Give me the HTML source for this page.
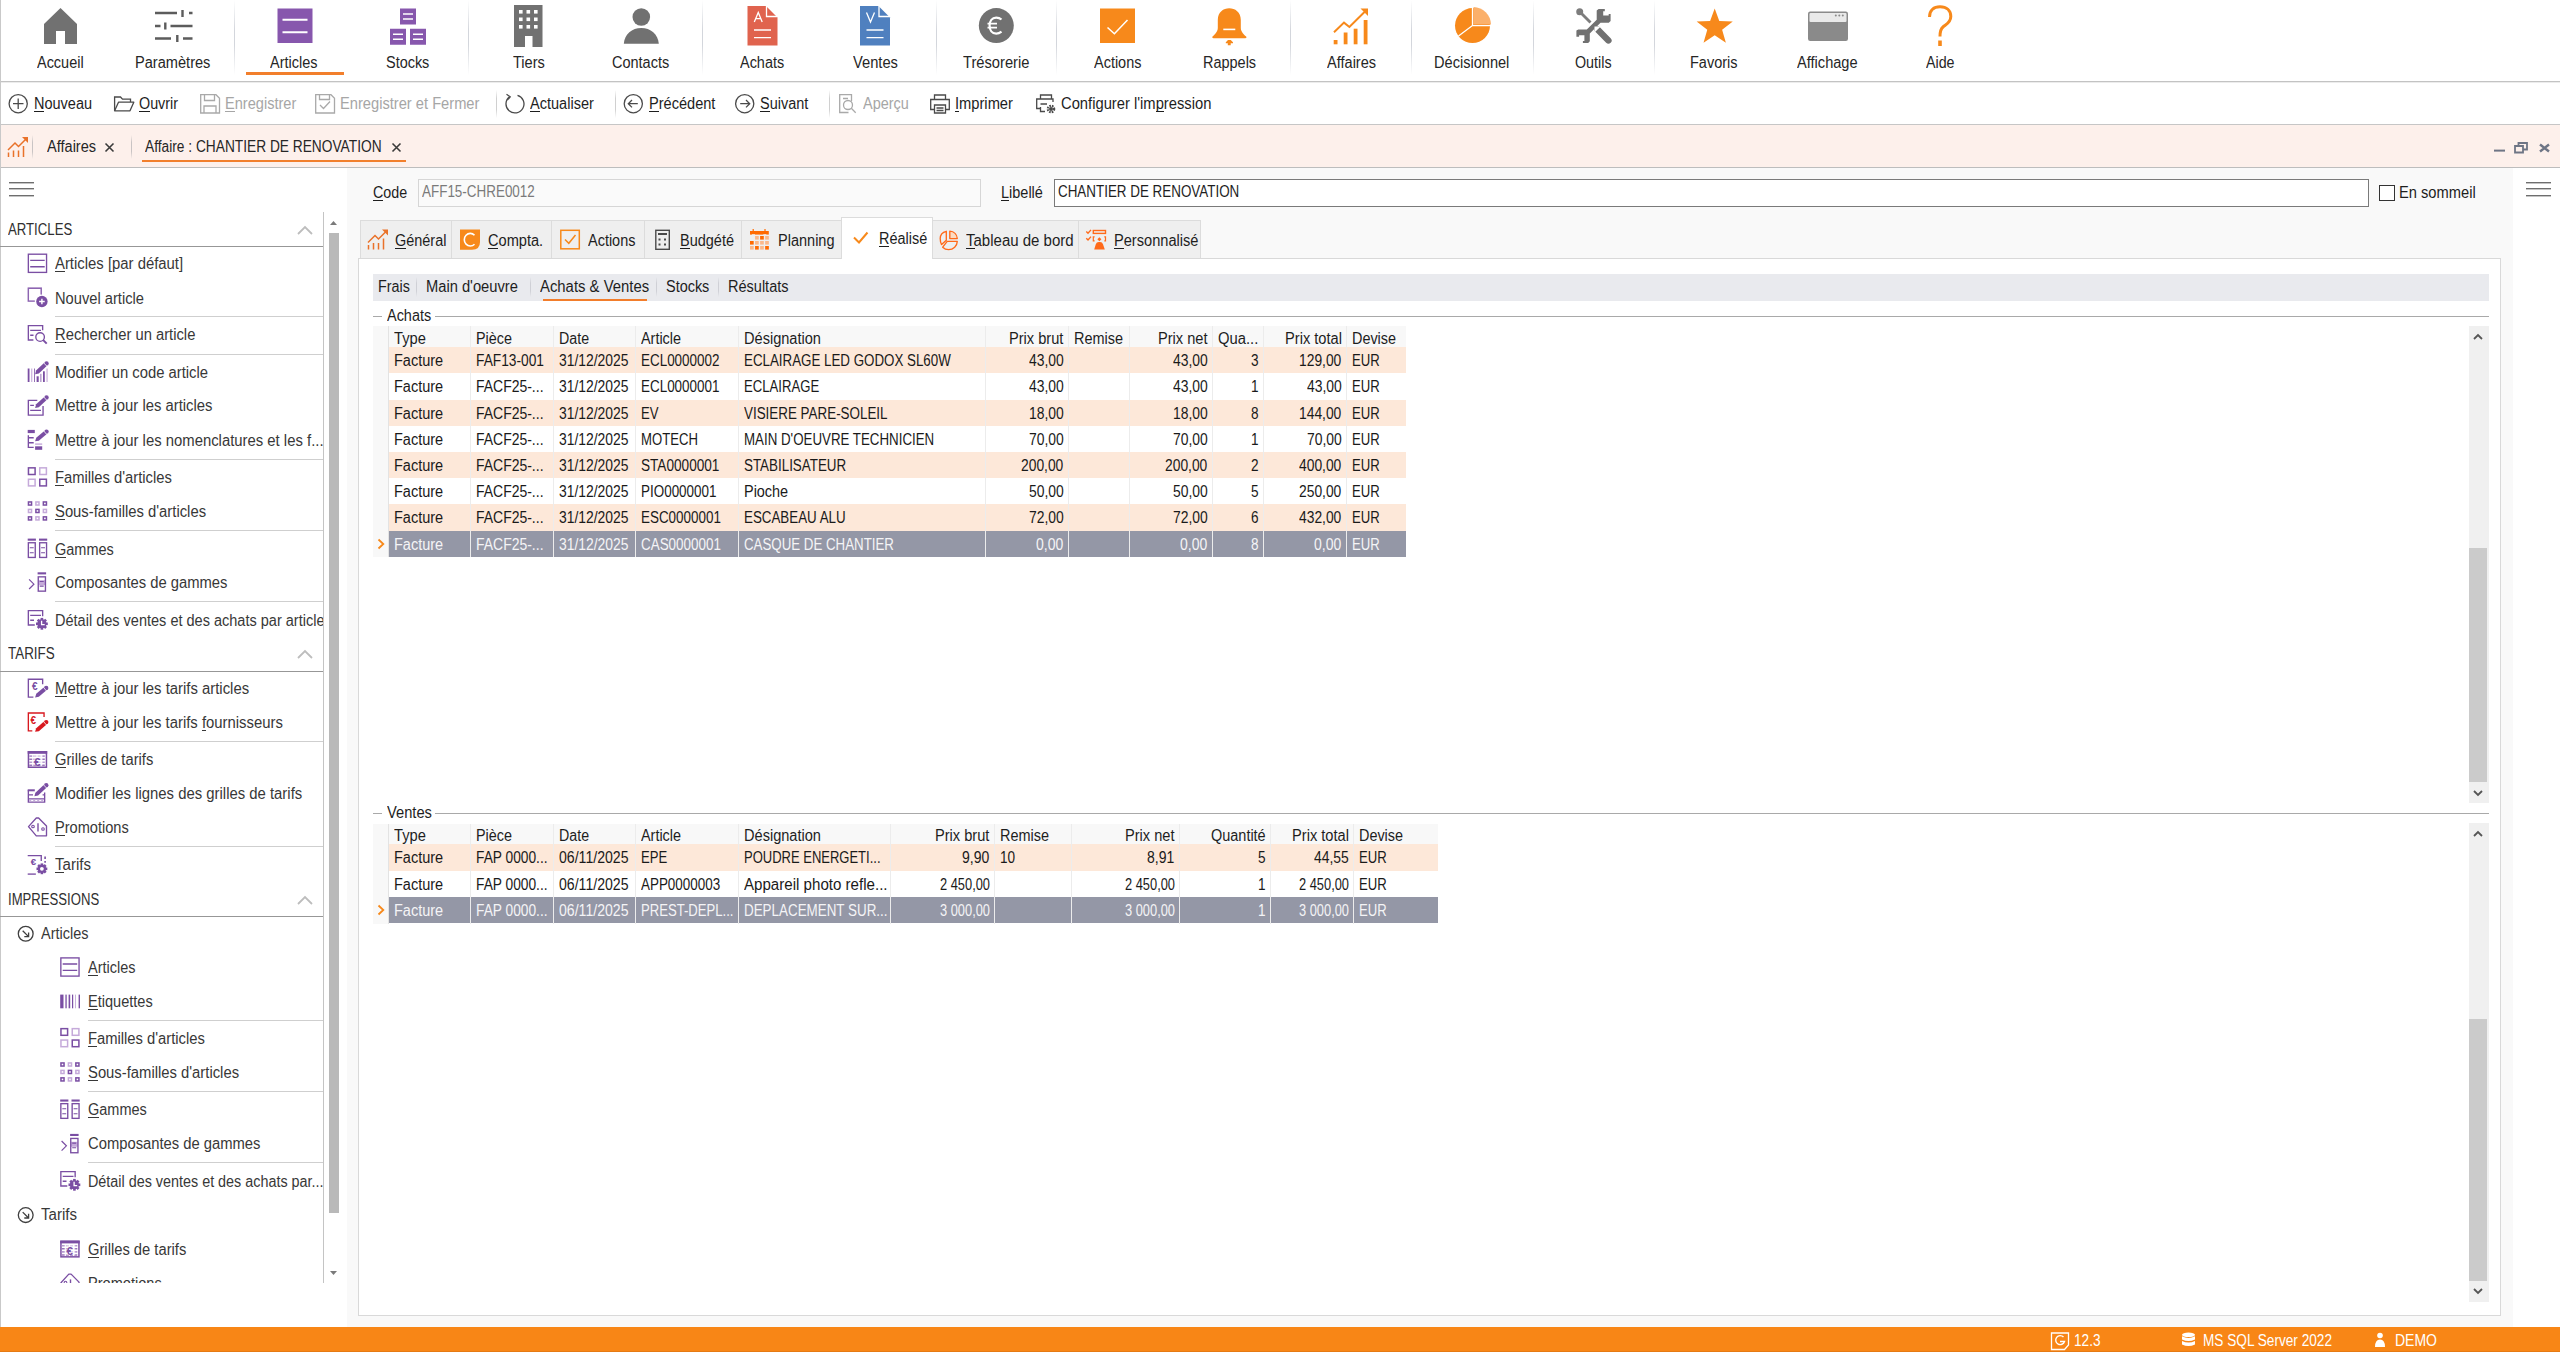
<!DOCTYPE html>
<html><head><meta charset="utf-8"><style>
html,body{margin:0;padding:0;width:2560px;height:1352px;overflow:hidden;background:#fff}
.t{position:absolute;white-space:pre;line-height:20px;font-family:"Liberation Sans",sans-serif;transform-origin:0 0}
svg{position:absolute;left:0;top:0}
</style></head><body>
<div style="position:absolute;left:0px;top:0px;width:2560px;height:1352px;background:#ffffff;"></div>
<div style="position:absolute;left:0px;top:0px;width:1px;height:1327px;background:#c9c9c9;"></div>
<div style="position:absolute;left:1px;top:81px;width:2559px;height:1px;background:#c3c3c3;"></div>
<div style="position:absolute;left:1px;top:82px;width:2559px;height:1px;background:#ececec;"></div>
<div style="position:absolute;left:234px;top:0px;width:1px;height:75px;background:linear-gradient(#ffffff,#d3d6dc 40%,#d3d6dc 60%,#ffffff);"></div>
<div style="position:absolute;left:468px;top:0px;width:1px;height:75px;background:linear-gradient(#ffffff,#d3d6dc 40%,#d3d6dc 60%,#ffffff);"></div>
<div style="position:absolute;left:702px;top:0px;width:1px;height:75px;background:linear-gradient(#ffffff,#d3d6dc 40%,#d3d6dc 60%,#ffffff);"></div>
<div style="position:absolute;left:936px;top:0px;width:1px;height:75px;background:linear-gradient(#ffffff,#d3d6dc 40%,#d3d6dc 60%,#ffffff);"></div>
<div style="position:absolute;left:1056px;top:0px;width:1px;height:75px;background:linear-gradient(#ffffff,#d3d6dc 40%,#d3d6dc 60%,#ffffff);"></div>
<div style="position:absolute;left:1290px;top:0px;width:1px;height:75px;background:linear-gradient(#ffffff,#d3d6dc 40%,#d3d6dc 60%,#ffffff);"></div>
<div style="position:absolute;left:1411px;top:0px;width:1px;height:75px;background:linear-gradient(#ffffff,#d3d6dc 40%,#d3d6dc 60%,#ffffff);"></div>
<div style="position:absolute;left:1533px;top:0px;width:1px;height:75px;background:linear-gradient(#ffffff,#d3d6dc 40%,#d3d6dc 60%,#ffffff);"></div>
<div style="position:absolute;left:1654px;top:0px;width:1px;height:75px;background:linear-gradient(#ffffff,#d3d6dc 40%,#d3d6dc 60%,#ffffff);"></div>
<div style="position:absolute;left:246px;top:71.5px;width:98px;height:3.3px;background:#f27f2c;"></div>
<div class="t" style="left:37.20px;top:53px;color:#262626;font-size:16px;transform:scaleX(0.9036);">Accueil</div>
<div class="t" style="left:135.30px;top:53px;color:#262626;font-size:16px;transform:scaleX(0.9118);">Paramètres</div>
<div class="t" style="left:270.29px;top:53px;color:#262626;font-size:16px;transform:scaleX(0.9040);">Articles</div>
<div class="t" style="left:385.84px;top:53px;color:#262626;font-size:16px;transform:scaleX(0.9020);">Stocks</div>
<div class="t" style="left:513.06px;top:53px;color:#262626;font-size:16px;transform:scaleX(0.9117);">Tiers</div>
<div class="t" style="left:612.39px;top:53px;color:#262626;font-size:16px;transform:scaleX(0.9061);">Contacts</div>
<div class="t" style="left:740.43px;top:53px;color:#262626;font-size:16px;transform:scaleX(0.9025);">Achats</div>
<div class="t" style="left:852.51px;top:53px;color:#262626;font-size:16px;transform:scaleX(0.9192);">Ventes</div>
<div class="t" style="left:963.28px;top:53px;color:#262626;font-size:16px;transform:scaleX(0.9187);">Trésorerie</div>
<div class="t" style="left:1094.03px;top:53px;color:#262626;font-size:16px;transform:scaleX(0.9040);">Actions</div>
<div class="t" style="left:1202.95px;top:53px;color:#262626;font-size:16px;transform:scaleX(0.9047);">Rappels</div>
<div class="t" style="left:1326.96px;top:53px;color:#262626;font-size:16px;transform:scaleX(0.9096);">Affaires</div>
<div class="t" style="left:1433.64px;top:53px;color:#262626;font-size:16px;transform:scaleX(0.9107);">Décisionnel</div>
<div class="t" style="left:1574.98px;top:53px;color:#262626;font-size:16px;transform:scaleX(0.8934);">Outils</div>
<div class="t" style="left:1690.25px;top:53px;color:#262626;font-size:16px;transform:scaleX(0.9058);">Favoris</div>
<div class="t" style="left:1796.70px;top:53px;color:#262626;font-size:16px;transform:scaleX(0.9125);">Affichage</div>
<div class="t" style="left:1925.74px;top:53px;color:#262626;font-size:16px;transform:scaleX(0.8904);">Aide</div>
<div style="position:absolute;left:1px;top:124px;width:2559px;height:1px;background:#c6c6c6;"></div>
<div style="position:absolute;left:496px;top:90px;width:1px;height:28px;background:linear-gradient(#ffffff,#d0d0d0 30%,#d0d0d0 70%,#ffffff);"></div>
<div style="position:absolute;left:615px;top:90px;width:1px;height:28px;background:linear-gradient(#ffffff,#d0d0d0 30%,#d0d0d0 70%,#ffffff);"></div>
<div style="position:absolute;left:829px;top:90px;width:1px;height:28px;background:linear-gradient(#ffffff,#d0d0d0 30%,#d0d0d0 70%,#ffffff);"></div>
<div class="t" style="left:34.00px;top:94px;color:#1e1e1e;font-size:16px;transform:scaleX(0.9064);">Nouveau</div>
<div style="position:absolute;left:34.00px;top:111px;width:10.47px;height:1px;background:#1e1e1e"></div>
<div class="t" style="left:139.00px;top:94px;color:#1e1e1e;font-size:16px;transform:scaleX(0.8954);">Ouvrir</div>
<div style="position:absolute;left:139.00px;top:111px;width:11.14px;height:1px;background:#1e1e1e"></div>
<div class="t" style="left:225.00px;top:94px;color:#a6a6a6;font-size:16px;transform:scaleX(0.9110);">Enregistrer</div>
<div style="position:absolute;left:225.00px;top:111px;width:9.72px;height:1px;background:#a6a6a6"></div>
<div class="t" style="left:340.00px;top:94px;color:#a6a6a6;font-size:16px;transform:scaleX(0.9169);">Enregistrer et Fermer</div>
<div class="t" style="left:530.00px;top:94px;color:#1e1e1e;font-size:16px;transform:scaleX(0.9094);">Actualiser</div>
<div style="position:absolute;left:530.00px;top:111px;width:9.71px;height:1px;background:#1e1e1e"></div>
<div class="t" style="left:649.00px;top:94px;color:#1e1e1e;font-size:16px;transform:scaleX(0.9100);">Précédent</div>
<div style="position:absolute;left:649.00px;top:111px;width:9.71px;height:1px;background:#1e1e1e"></div>
<div class="t" style="left:760.00px;top:94px;color:#1e1e1e;font-size:16px;transform:scaleX(0.9044);">Suivant</div>
<div style="position:absolute;left:760.00px;top:111px;width:9.65px;height:1px;background:#1e1e1e"></div>
<div class="t" style="left:862.50px;top:94px;color:#a6a6a6;font-size:16px;transform:scaleX(0.9033);">Aperçu</div>
<div class="t" style="left:955.00px;top:94px;color:#1e1e1e;font-size:16px;transform:scaleX(0.9179);">Imprimer</div>
<div style="position:absolute;left:955.00px;top:111px;width:4.08px;height:1px;background:#1e1e1e"></div>
<div class="t" style="left:1061.00px;top:94px;color:#1e1e1e;font-size:16px;transform:scaleX(0.9223);">Configurer l'impression</div>
<div style="position:absolute;left:1155.66px;top:111px;width:8.21px;height:1px;background:#1e1e1e"></div>
<div style="position:absolute;left:1px;top:125px;width:2559px;height:42px;background:#fdf0eb;"></div>
<div style="position:absolute;left:1px;top:167px;width:2559px;height:1px;background:#bdbdbd;"></div>
<div style="position:absolute;left:32px;top:135px;width:1px;height:24px;background:linear-gradient(#fdf0eb,#c9c4c4 30%,#c9c4c4 70%,#fdf0eb);"></div>
<div style="position:absolute;left:131px;top:135px;width:1px;height:24px;background:linear-gradient(#fdf0eb,#c9c4c4 30%,#c9c4c4 70%,#fdf0eb);"></div>
<div class="t" style="left:46.50px;top:137px;color:#262626;font-size:16px;transform:scaleX(0.9096);">Affaires</div>
<div class="t" style="left:145.00px;top:137px;color:#262626;font-size:16px;transform:scaleX(0.8583);">Affaire : CHANTIER DE RENOVATION</div>
<div style="position:absolute;left:142px;top:159.5px;width:264px;height:2px;background:#f27f2c;"></div>
<div style="position:absolute;left:1px;top:168px;width:346px;height:1159px;background:#ffffff;"></div>
<div style="position:absolute;left:323px;top:212px;width:1px;height:1071px;background:#c4c4c4;"></div>
<div style="position:absolute;left:329px;top:233px;width:10px;height:980px;background:#b9b9b9;"></div>
<div style="position:absolute;left:9px;top:182px;width:25px;height:1px;background:#6e6e6e;box-shadow:0 1px 0 #c4c4c4"></div>
<div style="position:absolute;left:9px;top:188px;width:25px;height:1px;background:#6e6e6e;box-shadow:0 1px 0 #c4c4c4"></div>
<div style="position:absolute;left:9px;top:195px;width:25px;height:1px;background:#6e6e6e;box-shadow:0 1px 0 #c4c4c4"></div>
<div style="position:absolute;left:0;top:0;width:323px;height:1283px;overflow:hidden">
<div class="t" style="left:8.00px;top:220px;color:#303030;font-size:16px;transform:scaleX(0.8237);">ARTICLES</div>
<div style="position:absolute;left:0px;top:246px;width:323px;height:1px;background:#979797;"></div>
<div class="t" style="left:8.00px;top:644px;color:#303030;font-size:16px;transform:scaleX(0.8382);">TARIFS</div>
<div style="position:absolute;left:0px;top:671px;width:323px;height:1px;background:#979797;"></div>
<div class="t" style="left:8.00px;top:890px;color:#303030;font-size:16px;transform:scaleX(0.8207);">IMPRESSIONS</div>
<div style="position:absolute;left:0px;top:916px;width:323px;height:1px;background:#979797;"></div>
<div class="t" style="left:55.00px;top:254px;color:#383838;font-size:16px;transform:scaleX(0.9296);">Articles [par défaut]</div>
<div style="position:absolute;left:55.00px;top:271px;width:9.92px;height:1px;background:#383838"></div>
<div class="t" style="left:55.00px;top:289px;color:#383838;font-size:16px;transform:scaleX(0.9172);">Nouvel article</div>
<div class="t" style="left:55.00px;top:325px;color:#383838;font-size:16px;transform:scaleX(0.9230);">Rechercher un article</div>
<div style="position:absolute;left:55.00px;top:342px;width:10.66px;height:1px;background:#383838"></div>
<div class="t" style="left:55.00px;top:363px;color:#383838;font-size:16px;transform:scaleX(0.9246);">Modifier un code article</div>
<div class="t" style="left:55.00px;top:396px;color:#383838;font-size:16px;transform:scaleX(0.9272);">Mettre à jour les articles</div>
<div class="t" style="left:55.00px;top:431px;color:#383838;font-size:16px;transform:scaleX(0.9291);">Mettre à jour les nomenclatures et les f...</div>
<div class="t" style="left:55.00px;top:468px;color:#383838;font-size:16px;transform:scaleX(0.9229);">Familles d'articles</div>
<div style="position:absolute;left:55.00px;top:485px;width:9.02px;height:1px;background:#383838"></div>
<div class="t" style="left:55.00px;top:502px;color:#383838;font-size:16px;transform:scaleX(0.9260);">Sous-familles d'articles</div>
<div style="position:absolute;left:55.00px;top:519px;width:9.88px;height:1px;background:#383838"></div>
<div class="t" style="left:55.00px;top:540px;color:#383838;font-size:16px;transform:scaleX(0.9052);">Gammes</div>
<div style="position:absolute;left:55.00px;top:557px;width:11.27px;height:1px;background:#383838"></div>
<div class="t" style="left:55.00px;top:573px;color:#383838;font-size:16px;transform:scaleX(0.9234);">Composantes de gammes</div>
<div class="t" style="left:55.00px;top:611px;color:#383838;font-size:16px;transform:scaleX(0.9073);">Détail des ventes et des achats par article</div>
<div class="t" style="left:55.00px;top:679px;color:#383838;font-size:16px;transform:scaleX(0.9289);">Mettre à jour les tarifs articles</div>
<div style="position:absolute;left:55.00px;top:696px;width:12.38px;height:1px;background:#383838"></div>
<div class="t" style="left:55.00px;top:713px;color:#383838;font-size:16px;transform:scaleX(0.9283);">Mettre à jour les tarifs fournisseurs</div>
<div style="position:absolute;left:201.92px;top:730px;width:4.13px;height:1px;background:#383838"></div>
<div class="t" style="left:55.00px;top:750px;color:#383838;font-size:16px;transform:scaleX(0.9211);">Grilles de tarifs</div>
<div style="position:absolute;left:55.00px;top:767px;width:11.46px;height:1px;background:#383838"></div>
<div class="t" style="left:55.00px;top:784px;color:#383838;font-size:16px;transform:scaleX(0.9297);">Modifier les lignes des grilles de tarifs</div>
<div class="t" style="left:55.00px;top:818px;color:#383838;font-size:16px;transform:scaleX(0.9115);">Promotions</div>
<div style="position:absolute;left:55.00px;top:835px;width:9.73px;height:1px;background:#383838"></div>
<div class="t" style="left:55.00px;top:855px;color:#383838;font-size:16px;transform:scaleX(0.9414);">Tarifs</div>
<div style="position:absolute;left:55.00px;top:872px;width:9.20px;height:1px;background:#383838"></div>
<div style="position:absolute;left:55px;top:316px;width:268px;height:1px;background:#cfcfcf;"></div>
<div style="position:absolute;left:55px;top:354px;width:268px;height:1px;background:#cfcfcf;"></div>
<div style="position:absolute;left:55px;top:459px;width:268px;height:1px;background:#cfcfcf;"></div>
<div style="position:absolute;left:55px;top:530px;width:268px;height:1px;background:#cfcfcf;"></div>
<div style="position:absolute;left:55px;top:601px;width:268px;height:1px;background:#cfcfcf;"></div>
<div style="position:absolute;left:55px;top:741px;width:268px;height:1px;background:#cfcfcf;"></div>
<div style="position:absolute;left:55px;top:846px;width:268px;height:1px;background:#cfcfcf;"></div>
<div class="t" style="left:41.00px;top:924px;color:#383838;font-size:16px;transform:scaleX(0.9040);">Articles</div>
<div class="t" style="left:88.00px;top:958px;color:#383838;font-size:16px;transform:scaleX(0.9040);">Articles</div>
<div style="position:absolute;left:88.00px;top:975px;width:9.65px;height:1px;background:#383838"></div>
<div class="t" style="left:88.00px;top:992px;color:#383838;font-size:16px;transform:scaleX(0.9096);">Etiquettes</div>
<div style="position:absolute;left:88.00px;top:1009px;width:9.71px;height:1px;background:#383838"></div>
<div class="t" style="left:88.00px;top:1029px;color:#383838;font-size:16px;transform:scaleX(0.9229);">Familles d'articles</div>
<div style="position:absolute;left:88.00px;top:1046px;width:9.02px;height:1px;background:#383838"></div>
<div class="t" style="left:88.00px;top:1063px;color:#383838;font-size:16px;transform:scaleX(0.9260);">Sous-familles d'articles</div>
<div style="position:absolute;left:88.00px;top:1080px;width:9.88px;height:1px;background:#383838"></div>
<div class="t" style="left:88.00px;top:1100px;color:#383838;font-size:16px;transform:scaleX(0.9052);">Gammes</div>
<div style="position:absolute;left:88.00px;top:1117px;width:11.27px;height:1px;background:#383838"></div>
<div class="t" style="left:88.00px;top:1134px;color:#383838;font-size:16px;transform:scaleX(0.9234);">Composantes de gammes</div>
<div class="t" style="left:88.00px;top:1172px;color:#383838;font-size:16px;transform:scaleX(0.8976);">Détail des ventes et des achats par...</div>
<div style="position:absolute;left:88px;top:1020px;width:235px;height:1px;background:#cfcfcf;"></div>
<div style="position:absolute;left:88px;top:1091px;width:235px;height:1px;background:#cfcfcf;"></div>
<div style="position:absolute;left:88px;top:1162px;width:235px;height:1px;background:#cfcfcf;"></div>
<div class="t" style="left:41.00px;top:1205px;color:#383838;font-size:16px;transform:scaleX(0.9414);">Tarifs</div>
</div>
<div style="position:absolute;left:0;top:1230px;width:323px;height:53px;overflow:hidden">
<div class="t" style="left:88.00px;top:10px;color:#383838;font-size:16px;transform:scaleX(0.9211);">Grilles de tarifs</div>
<div style="position:absolute;left:88.00px;top:27px;width:11.46px;height:1px;background:#383838"></div>
<div class="t" style="left:88.00px;top:44px;color:#383838;font-size:16px;transform:scaleX(0.9115);">Promotions</div>
<div style="position:absolute;left:88.00px;top:61px;width:9.73px;height:1px;background:#383838"></div>
</div>
<div style="position:absolute;left:347px;top:168px;width:2166px;height:1159px;background:#f9f9f9;"></div>
<div class="t" style="left:373.00px;top:183px;color:#1e1e1e;font-size:16px;transform:scaleX(0.8937);">Code</div>
<div style="position:absolute;left:373.00px;top:200px;width:10.33px;height:1px;background:#1e1e1e"></div>
<div style="position:absolute;left:418px;top:179px;width:563px;height:28px;background:#fafafa;box-sizing:border-box;border:1px solid #d6d6d6"></div>
<div class="t" style="left:422.00px;top:182px;color:#7a7a7a;font-size:16px;transform:scaleX(0.8399);">AFF15-CHRE0012</div>
<div class="t" style="left:1001.00px;top:183px;color:#1e1e1e;font-size:16px;transform:scaleX(0.9052);">Libellé</div>
<div style="position:absolute;left:1001.00px;top:200px;width:8.05px;height:1px;background:#1e1e1e"></div>
<div style="position:absolute;left:1054px;top:179px;width:1315px;height:28px;background:#ffffff;box-sizing:border-box;border:1px solid #7a7a7a"></div>
<div class="t" style="left:1058.00px;top:182px;color:#1e1e1e;font-size:16px;transform:scaleX(0.8380);">CHANTIER DE RENOVATION</div>
<div style="position:absolute;left:2379px;top:185px;width:16px;height:16px;background:#ffffff;box-sizing:border-box;border:1px solid #333"></div>
<div class="t" style="left:2399.00px;top:183px;color:#1e1e1e;font-size:16px;transform:scaleX(0.9171);">En sommeil</div>
<div style="position:absolute;left:2513px;top:168px;width:47px;height:1159px;background:#ffffff;"></div>
<div style="position:absolute;left:2526px;top:182px;width:25px;height:1px;background:#6e6e6e;box-shadow:0 1px 0 #c4c4c4"></div>
<div style="position:absolute;left:2526px;top:188px;width:25px;height:1px;background:#6e6e6e;box-shadow:0 1px 0 #c4c4c4"></div>
<div style="position:absolute;left:2526px;top:195px;width:25px;height:1px;background:#6e6e6e;box-shadow:0 1px 0 #c4c4c4"></div>
<div style="position:absolute;left:360px;top:220px;width:841px;height:38px;background:#efefef;box-sizing:border-box;border:1px solid #dcdcdc;border-bottom:none"></div>
<div style="position:absolute;left:451px;top:221px;width:1px;height:37px;background:#dcdcdc;"></div>
<div style="position:absolute;left:551px;top:221px;width:1px;height:37px;background:#dcdcdc;"></div>
<div style="position:absolute;left:644px;top:221px;width:1px;height:37px;background:#dcdcdc;"></div>
<div style="position:absolute;left:741px;top:221px;width:1px;height:37px;background:#dcdcdc;"></div>
<div style="position:absolute;left:1078px;top:221px;width:1px;height:37px;background:#dcdcdc;"></div>
<div style="position:absolute;left:358px;top:258px;width:2143px;height:1058px;background:#ffffff;box-sizing:border-box;border:1px solid #d9d9d9"></div>
<div style="position:absolute;left:841px;top:217px;width:92px;height:42px;background:#ffffff;box-sizing:border-box;border:1px solid #dcdcdc;border-bottom:none"></div>
<div class="t" style="left:395.00px;top:231px;color:#1e1e1e;font-size:16px;transform:scaleX(0.9024);">Général</div>
<div style="position:absolute;left:395.00px;top:248px;width:11.23px;height:1px;background:#1e1e1e"></div>
<div class="t" style="left:487.60px;top:231px;color:#1e1e1e;font-size:16px;transform:scaleX(0.9124);">Compta.</div>
<div style="position:absolute;left:487.60px;top:248px;width:10.54px;height:1px;background:#1e1e1e"></div>
<div class="t" style="left:587.60px;top:231px;color:#1e1e1e;font-size:16px;transform:scaleX(0.9040);">Actions</div>
<div class="t" style="left:680.00px;top:231px;color:#1e1e1e;font-size:16px;transform:scaleX(0.9065);">Budgété</div>
<div style="position:absolute;left:680.00px;top:248px;width:9.68px;height:1px;background:#1e1e1e"></div>
<div class="t" style="left:778.00px;top:231px;color:#1e1e1e;font-size:16px;transform:scaleX(0.9073);">Planning</div>
<div class="t" style="left:878.75px;top:229px;color:#1e1e1e;font-size:16px;transform:scaleX(0.9026);">Réalisé</div>
<div style="position:absolute;left:878.75px;top:246px;width:10.43px;height:1px;background:#1e1e1e"></div>
<div class="t" style="left:966.00px;top:231px;color:#1e1e1e;font-size:16px;transform:scaleX(0.9381);">Tableau de bord</div>
<div style="position:absolute;left:966.00px;top:248px;width:9.17px;height:1px;background:#1e1e1e"></div>
<div class="t" style="left:1114.00px;top:231px;color:#1e1e1e;font-size:16px;transform:scaleX(0.9132);">Personnalisé</div>
<div style="position:absolute;left:1114.00px;top:248px;width:9.75px;height:1px;background:#1e1e1e"></div>
<div style="position:absolute;left:373px;top:274px;width:2116px;height:27px;background:#e9eaee;"></div>
<div style="position:absolute;left:416px;top:277px;width:1px;height:20px;background:linear-gradient(#e9eaee,#cfd0d6 30%,#cfd0d6 70%,#e9eaee);"></div>
<div style="position:absolute;left:530px;top:277px;width:1px;height:20px;background:linear-gradient(#e9eaee,#cfd0d6 30%,#cfd0d6 70%,#e9eaee);"></div>
<div style="position:absolute;left:656px;top:277px;width:1px;height:20px;background:linear-gradient(#e9eaee,#cfd0d6 30%,#cfd0d6 70%,#e9eaee);"></div>
<div style="position:absolute;left:718px;top:277px;width:1px;height:20px;background:linear-gradient(#e9eaee,#cfd0d6 30%,#cfd0d6 70%,#e9eaee);"></div>
<div class="t" style="left:377.60px;top:277px;color:#1e1e1e;font-size:16px;transform:scaleX(0.8965);">Frais</div>
<div class="t" style="left:426.00px;top:277px;color:#1e1e1e;font-size:16px;transform:scaleX(0.9186);">Main d'oeuvre</div>
<div class="t" style="left:540.00px;top:277px;color:#1e1e1e;font-size:16px;transform:scaleX(0.9293);">Achats &amp; Ventes</div>
<div class="t" style="left:666.00px;top:277px;color:#1e1e1e;font-size:16px;transform:scaleX(0.9020);">Stocks</div>
<div class="t" style="left:728.00px;top:277px;color:#1e1e1e;font-size:16px;transform:scaleX(0.9072);">Résultats</div>
<div style="position:absolute;left:542.5px;top:299.2px;width:104px;height:1.8px;background:#f27d2b;"></div>
<div style="position:absolute;left:373px;top:316px;width:9px;height:1px;background:#a9a9a9;"></div>
<div style="position:absolute;left:435.0px;top:316px;width:2054.0px;height:1px;background:#a9a9a9;"></div>
<div class="t" style="left:386.50px;top:305.5px;color:#1e1e1e;font-size:16px;transform:scaleX(0.9025);">Achats</div>
<div style="position:absolute;left:373px;top:813px;width:9px;height:1px;background:#a9a9a9;"></div>
<div style="position:absolute;left:435.0px;top:813px;width:2054.0px;height:1px;background:#a9a9a9;"></div>
<div class="t" style="left:386.50px;top:802.5px;color:#1e1e1e;font-size:16px;transform:scaleX(0.9192);">Ventes</div>
<div style="position:absolute;left:373px;top:326px;width:1033px;height:21px;background:#f8f8f8;"></div>
<div style="position:absolute;left:373px;top:347px;width:15px;height:210px;background:#f8f8f8;"></div>
<div style="position:absolute;left:388px;top:326px;width:1px;height:231px;background:#e3e3e3;"></div>
<div style="position:absolute;left:389px;top:347px;width:1017px;height:26px;background:#fde8d9;"></div>
<div style="position:absolute;left:389px;top:373px;width:1017px;height:27px;background:#ffffff;"></div>
<div style="position:absolute;left:389px;top:400px;width:1017px;height:26px;background:#fde8d9;"></div>
<div style="position:absolute;left:389px;top:426px;width:1017px;height:26px;background:#ffffff;"></div>
<div style="position:absolute;left:389px;top:452px;width:1017px;height:26px;background:#fde8d9;"></div>
<div style="position:absolute;left:389px;top:478px;width:1017px;height:26px;background:#ffffff;"></div>
<div style="position:absolute;left:389px;top:504px;width:1017px;height:27px;background:#fde8d9;"></div>
<div style="position:absolute;left:389px;top:531px;width:1017px;height:26px;background:#9497a6;"></div>
<div style="position:absolute;left:470px;top:326px;width:1px;height:231px;background:#ececec;"></div>
<div style="position:absolute;left:553px;top:326px;width:1px;height:231px;background:#ececec;"></div>
<div style="position:absolute;left:635px;top:326px;width:1px;height:231px;background:#ececec;"></div>
<div style="position:absolute;left:738px;top:326px;width:1px;height:231px;background:#ececec;"></div>
<div style="position:absolute;left:985px;top:326px;width:1px;height:231px;background:#ececec;"></div>
<div style="position:absolute;left:1068px;top:326px;width:1px;height:231px;background:#ececec;"></div>
<div style="position:absolute;left:1129px;top:326px;width:1px;height:231px;background:#ececec;"></div>
<div style="position:absolute;left:1212px;top:326px;width:1px;height:231px;background:#ececec;"></div>
<div style="position:absolute;left:1263px;top:326px;width:1px;height:231px;background:#ececec;"></div>
<div style="position:absolute;left:1346px;top:326px;width:1px;height:231px;background:#ececec;"></div>
<div class="t" style="left:393.75px;top:328.5px;color:#1e1e1e;font-size:16px;transform:scaleX(0.9193);">Type</div>
<div class="t" style="left:475.75px;top:328.5px;color:#1e1e1e;font-size:16px;transform:scaleX(0.8974);">Pièce</div>
<div class="t" style="left:558.75px;top:328.5px;color:#1e1e1e;font-size:16px;transform:scaleX(0.8895);">Date</div>
<div class="t" style="left:640.75px;top:328.5px;color:#1e1e1e;font-size:16px;transform:scaleX(0.9002);">Article</div>
<div class="t" style="left:743.75px;top:328.5px;color:#1e1e1e;font-size:16px;transform:scaleX(0.9110);">Désignation</div>
<div class="t" style="left:1009.07px;top:328.5px;color:#1e1e1e;font-size:16px;transform:scaleX(0.9137);">Prix brut</div>
<div class="t" style="left:1073.75px;top:328.5px;color:#1e1e1e;font-size:16px;transform:scaleX(0.9030);">Remise</div>
<div class="t" style="left:1158.00px;top:328.5px;color:#1e1e1e;font-size:16px;transform:scaleX(0.9126);">Prix net</div>
<div class="t" style="left:1218.19px;top:328.5px;color:#1e1e1e;font-size:16px;transform:scaleX(0.9250);">Qua...</div>
<div class="t" style="left:1284.60px;top:328.5px;color:#1e1e1e;font-size:16px;transform:scaleX(0.9142);">Prix total</div>
<div class="t" style="left:1351.75px;top:328.5px;color:#1e1e1e;font-size:16px;transform:scaleX(0.9006);">Devise</div>
<div class="t" style="left:394.00px;top:351px;color:#1a1a1a;font-size:16px;transform:scaleX(0.9064);">Facture</div>
<div class="t" style="left:476.00px;top:351px;color:#1a1a1a;font-size:16px;transform:scaleX(0.8592);">FAF13-001</div>
<div class="t" style="left:559.00px;top:351px;color:#1a1a1a;font-size:16px;transform:scaleX(0.8681);">31/12/2025</div>
<div class="t" style="left:641.00px;top:351px;color:#1a1a1a;font-size:16px;transform:scaleX(0.8395);">ECL0000002</div>
<div class="t" style="left:744.00px;top:351px;color:#1a1a1a;font-size:16px;transform:scaleX(0.8335);">ECLAIRAGE LED GODOX SL60W</div>
<div class="t" style="left:1028.75px;top:351px;color:#1a1a1a;font-size:16px;transform:scaleX(0.8681);">43,00</div>
<div class="t" style="left:1172.75px;top:351px;color:#1a1a1a;font-size:16px;transform:scaleX(0.8681);">43,00</div>
<div class="t" style="left:1250.95px;top:351px;color:#1a1a1a;font-size:16px;transform:scaleX(0.8489);">3</div>
<div class="t" style="left:1299.19px;top:351px;color:#1a1a1a;font-size:16px;transform:scaleX(0.8646);">129,00</div>
<div class="t" style="left:1352.00px;top:351px;color:#1a1a1a;font-size:16px;transform:scaleX(0.8207);">EUR</div>
<div class="t" style="left:394.00px;top:377px;color:#1a1a1a;font-size:16px;transform:scaleX(0.9064);">Facture</div>
<div class="t" style="left:476.00px;top:377px;color:#1a1a1a;font-size:16px;transform:scaleX(0.8727);">FACF25-...</div>
<div class="t" style="left:559.00px;top:377px;color:#1a1a1a;font-size:16px;transform:scaleX(0.8681);">31/12/2025</div>
<div class="t" style="left:641.00px;top:377px;color:#1a1a1a;font-size:16px;transform:scaleX(0.8395);">ECL0000001</div>
<div class="t" style="left:744.00px;top:377px;color:#1a1a1a;font-size:16px;transform:scaleX(0.8207);">ECLAIRAGE</div>
<div class="t" style="left:1028.75px;top:377px;color:#1a1a1a;font-size:16px;transform:scaleX(0.8681);">43,00</div>
<div class="t" style="left:1172.75px;top:377px;color:#1a1a1a;font-size:16px;transform:scaleX(0.8681);">43,00</div>
<div class="t" style="left:1250.95px;top:377px;color:#1a1a1a;font-size:16px;transform:scaleX(0.8489);">1</div>
<div class="t" style="left:1306.75px;top:377px;color:#1a1a1a;font-size:16px;transform:scaleX(0.8681);">43,00</div>
<div class="t" style="left:1352.00px;top:377px;color:#1a1a1a;font-size:16px;transform:scaleX(0.8207);">EUR</div>
<div class="t" style="left:394.00px;top:404px;color:#1a1a1a;font-size:16px;transform:scaleX(0.9064);">Facture</div>
<div class="t" style="left:476.00px;top:404px;color:#1a1a1a;font-size:16px;transform:scaleX(0.8727);">FACF25-...</div>
<div class="t" style="left:559.00px;top:404px;color:#1a1a1a;font-size:16px;transform:scaleX(0.8681);">31/12/2025</div>
<div class="t" style="left:641.00px;top:404px;color:#1a1a1a;font-size:16px;transform:scaleX(0.8207);">EV</div>
<div class="t" style="left:744.00px;top:404px;color:#1a1a1a;font-size:16px;transform:scaleX(0.8379);">VISIERE PARE-SOLEIL</div>
<div class="t" style="left:1028.75px;top:404px;color:#1a1a1a;font-size:16px;transform:scaleX(0.8681);">18,00</div>
<div class="t" style="left:1172.75px;top:404px;color:#1a1a1a;font-size:16px;transform:scaleX(0.8681);">18,00</div>
<div class="t" style="left:1250.95px;top:404px;color:#1a1a1a;font-size:16px;transform:scaleX(0.8489);">8</div>
<div class="t" style="left:1299.19px;top:404px;color:#1a1a1a;font-size:16px;transform:scaleX(0.8646);">144,00</div>
<div class="t" style="left:1352.00px;top:404px;color:#1a1a1a;font-size:16px;transform:scaleX(0.8207);">EUR</div>
<div class="t" style="left:394.00px;top:430px;color:#1a1a1a;font-size:16px;transform:scaleX(0.9064);">Facture</div>
<div class="t" style="left:476.00px;top:430px;color:#1a1a1a;font-size:16px;transform:scaleX(0.8727);">FACF25-...</div>
<div class="t" style="left:559.00px;top:430px;color:#1a1a1a;font-size:16px;transform:scaleX(0.8681);">31/12/2025</div>
<div class="t" style="left:641.00px;top:430px;color:#1a1a1a;font-size:16px;transform:scaleX(0.8207);">MOTECH</div>
<div class="t" style="left:744.00px;top:430px;color:#1a1a1a;font-size:16px;transform:scaleX(0.8322);">MAIN D'OEUVRE TECHNICIEN</div>
<div class="t" style="left:1028.75px;top:430px;color:#1a1a1a;font-size:16px;transform:scaleX(0.8681);">70,00</div>
<div class="t" style="left:1172.75px;top:430px;color:#1a1a1a;font-size:16px;transform:scaleX(0.8681);">70,00</div>
<div class="t" style="left:1250.95px;top:430px;color:#1a1a1a;font-size:16px;transform:scaleX(0.8489);">1</div>
<div class="t" style="left:1306.75px;top:430px;color:#1a1a1a;font-size:16px;transform:scaleX(0.8681);">70,00</div>
<div class="t" style="left:1352.00px;top:430px;color:#1a1a1a;font-size:16px;transform:scaleX(0.8207);">EUR</div>
<div class="t" style="left:394.00px;top:456px;color:#1a1a1a;font-size:16px;transform:scaleX(0.9064);">Facture</div>
<div class="t" style="left:476.00px;top:456px;color:#1a1a1a;font-size:16px;transform:scaleX(0.8727);">FACF25-...</div>
<div class="t" style="left:559.00px;top:456px;color:#1a1a1a;font-size:16px;transform:scaleX(0.8681);">31/12/2025</div>
<div class="t" style="left:641.00px;top:456px;color:#1a1a1a;font-size:16px;transform:scaleX(0.8503);">STA0000001</div>
<div class="t" style="left:744.00px;top:456px;color:#1a1a1a;font-size:16px;transform:scaleX(0.8367);">STABILISATEUR</div>
<div class="t" style="left:1021.19px;top:456px;color:#1a1a1a;font-size:16px;transform:scaleX(0.8646);">200,00</div>
<div class="t" style="left:1165.19px;top:456px;color:#1a1a1a;font-size:16px;transform:scaleX(0.8646);">200,00</div>
<div class="t" style="left:1250.95px;top:456px;color:#1a1a1a;font-size:16px;transform:scaleX(0.8489);">2</div>
<div class="t" style="left:1299.19px;top:456px;color:#1a1a1a;font-size:16px;transform:scaleX(0.8646);">400,00</div>
<div class="t" style="left:1352.00px;top:456px;color:#1a1a1a;font-size:16px;transform:scaleX(0.8207);">EUR</div>
<div class="t" style="left:394.00px;top:482px;color:#1a1a1a;font-size:16px;transform:scaleX(0.9064);">Facture</div>
<div class="t" style="left:476.00px;top:482px;color:#1a1a1a;font-size:16px;transform:scaleX(0.8727);">FACF25-...</div>
<div class="t" style="left:559.00px;top:482px;color:#1a1a1a;font-size:16px;transform:scaleX(0.8681);">31/12/2025</div>
<div class="t" style="left:641.00px;top:482px;color:#1a1a1a;font-size:16px;transform:scaleX(0.8402);">PIO0000001</div>
<div class="t" style="left:744.00px;top:482px;color:#1a1a1a;font-size:16px;transform:scaleX(0.9025);">Pioche</div>
<div class="t" style="left:1028.75px;top:482px;color:#1a1a1a;font-size:16px;transform:scaleX(0.8681);">50,00</div>
<div class="t" style="left:1172.75px;top:482px;color:#1a1a1a;font-size:16px;transform:scaleX(0.8681);">50,00</div>
<div class="t" style="left:1250.95px;top:482px;color:#1a1a1a;font-size:16px;transform:scaleX(0.8489);">5</div>
<div class="t" style="left:1299.19px;top:482px;color:#1a1a1a;font-size:16px;transform:scaleX(0.8646);">250,00</div>
<div class="t" style="left:1352.00px;top:482px;color:#1a1a1a;font-size:16px;transform:scaleX(0.8207);">EUR</div>
<div class="t" style="left:394.00px;top:508px;color:#1a1a1a;font-size:16px;transform:scaleX(0.9064);">Facture</div>
<div class="t" style="left:476.00px;top:508px;color:#1a1a1a;font-size:16px;transform:scaleX(0.8727);">FACF25-...</div>
<div class="t" style="left:559.00px;top:508px;color:#1a1a1a;font-size:16px;transform:scaleX(0.8681);">31/12/2025</div>
<div class="t" style="left:641.00px;top:508px;color:#1a1a1a;font-size:16px;transform:scaleX(0.8391);">ESC0000001</div>
<div class="t" style="left:744.00px;top:508px;color:#1a1a1a;font-size:16px;transform:scaleX(0.8340);">ESCABEAU ALU</div>
<div class="t" style="left:1028.75px;top:508px;color:#1a1a1a;font-size:16px;transform:scaleX(0.8681);">72,00</div>
<div class="t" style="left:1172.75px;top:508px;color:#1a1a1a;font-size:16px;transform:scaleX(0.8681);">72,00</div>
<div class="t" style="left:1250.95px;top:508px;color:#1a1a1a;font-size:16px;transform:scaleX(0.8489);">6</div>
<div class="t" style="left:1299.19px;top:508px;color:#1a1a1a;font-size:16px;transform:scaleX(0.8646);">432,00</div>
<div class="t" style="left:1352.00px;top:508px;color:#1a1a1a;font-size:16px;transform:scaleX(0.8207);">EUR</div>
<div class="t" style="left:394.00px;top:535px;color:#f4f4f6;font-size:16px;transform:scaleX(0.9064);">Facture</div>
<div class="t" style="left:476.00px;top:535px;color:#f4f4f6;font-size:16px;transform:scaleX(0.8727);">FACF25-...</div>
<div class="t" style="left:559.00px;top:535px;color:#f4f4f6;font-size:16px;transform:scaleX(0.8681);">31/12/2025</div>
<div class="t" style="left:641.00px;top:535px;color:#f4f4f6;font-size:16px;transform:scaleX(0.8391);">CAS0000001</div>
<div class="t" style="left:744.00px;top:535px;color:#f4f4f6;font-size:16px;transform:scaleX(0.8306);">CASQUE DE CHANTIER</div>
<div class="t" style="left:1036.30px;top:535px;color:#f4f4f6;font-size:16px;transform:scaleX(0.8736);">0,00</div>
<div class="t" style="left:1180.30px;top:535px;color:#f4f4f6;font-size:16px;transform:scaleX(0.8736);">0,00</div>
<div class="t" style="left:1250.95px;top:535px;color:#f4f4f6;font-size:16px;transform:scaleX(0.8489);">8</div>
<div class="t" style="left:1314.30px;top:535px;color:#f4f4f6;font-size:16px;transform:scaleX(0.8736);">0,00</div>
<div class="t" style="left:1352.00px;top:535px;color:#f4f4f6;font-size:16px;transform:scaleX(0.8207);">EUR</div>
<div style="position:absolute;left:373px;top:823.5px;width:1065px;height:21px;background:#f8f8f8;"></div>
<div style="position:absolute;left:373px;top:844.5px;width:15px;height:79px;background:#f8f8f8;"></div>
<div style="position:absolute;left:388px;top:823.5px;width:1px;height:100px;background:#e3e3e3;"></div>
<div style="position:absolute;left:389px;top:844px;width:1049px;height:27px;background:#fde8d9;"></div>
<div style="position:absolute;left:389px;top:871px;width:1049px;height:26px;background:#ffffff;"></div>
<div style="position:absolute;left:389px;top:897px;width:1049px;height:26px;background:#9497a6;"></div>
<div style="position:absolute;left:470px;top:823.5px;width:1px;height:100px;background:#ececec;"></div>
<div style="position:absolute;left:553px;top:823.5px;width:1px;height:100px;background:#ececec;"></div>
<div style="position:absolute;left:635px;top:823.5px;width:1px;height:100px;background:#ececec;"></div>
<div style="position:absolute;left:738px;top:823.5px;width:1px;height:100px;background:#ececec;"></div>
<div style="position:absolute;left:890px;top:823.5px;width:1px;height:100px;background:#ececec;"></div>
<div style="position:absolute;left:994px;top:823.5px;width:1px;height:100px;background:#ececec;"></div>
<div style="position:absolute;left:1071px;top:823.5px;width:1px;height:100px;background:#ececec;"></div>
<div style="position:absolute;left:1179px;top:823.5px;width:1px;height:100px;background:#ececec;"></div>
<div style="position:absolute;left:1270px;top:823.5px;width:1px;height:100px;background:#ececec;"></div>
<div style="position:absolute;left:1353px;top:823.5px;width:1px;height:100px;background:#ececec;"></div>
<div class="t" style="left:393.75px;top:826.0px;color:#1e1e1e;font-size:16px;transform:scaleX(0.9193);">Type</div>
<div class="t" style="left:475.75px;top:826.0px;color:#1e1e1e;font-size:16px;transform:scaleX(0.8974);">Pièce</div>
<div class="t" style="left:558.75px;top:826.0px;color:#1e1e1e;font-size:16px;transform:scaleX(0.8895);">Date</div>
<div class="t" style="left:640.75px;top:826.0px;color:#1e1e1e;font-size:16px;transform:scaleX(0.9002);">Article</div>
<div class="t" style="left:743.75px;top:826.0px;color:#1e1e1e;font-size:16px;transform:scaleX(0.9110);">Désignation</div>
<div class="t" style="left:935.07px;top:826.0px;color:#1e1e1e;font-size:16px;transform:scaleX(0.9137);">Prix brut</div>
<div class="t" style="left:999.75px;top:826.0px;color:#1e1e1e;font-size:16px;transform:scaleX(0.9030);">Remise</div>
<div class="t" style="left:1125.00px;top:826.0px;color:#1e1e1e;font-size:16px;transform:scaleX(0.9126);">Prix net</div>
<div class="t" style="left:1210.84px;top:826.0px;color:#1e1e1e;font-size:16px;transform:scaleX(0.9038);">Quantité</div>
<div class="t" style="left:1291.60px;top:826.0px;color:#1e1e1e;font-size:16px;transform:scaleX(0.9142);">Prix total</div>
<div class="t" style="left:1358.75px;top:826.0px;color:#1e1e1e;font-size:16px;transform:scaleX(0.9006);">Devise</div>
<div class="t" style="left:394.00px;top:848px;color:#1a1a1a;font-size:16px;transform:scaleX(0.9064);">Facture</div>
<div class="t" style="left:476.00px;top:848px;color:#1a1a1a;font-size:16px;transform:scaleX(0.8582);">FAP 0000...</div>
<div class="t" style="left:559.00px;top:848px;color:#1a1a1a;font-size:16px;transform:scaleX(0.8812);">06/11/2025</div>
<div class="t" style="left:641.00px;top:848px;color:#1a1a1a;font-size:16px;transform:scaleX(0.8207);">EPE</div>
<div class="t" style="left:744.00px;top:848px;color:#1a1a1a;font-size:16px;transform:scaleX(0.8124);">POUDRE ENERGETI...</div>
<div class="t" style="left:962.30px;top:848px;color:#1a1a1a;font-size:16px;transform:scaleX(0.8736);">9,90</div>
<div class="t" style="left:1000.00px;top:848px;color:#1a1a1a;font-size:16px;transform:scaleX(0.8489);">10</div>
<div class="t" style="left:1147.30px;top:848px;color:#1a1a1a;font-size:16px;transform:scaleX(0.8736);">8,91</div>
<div class="t" style="left:1257.95px;top:848px;color:#1a1a1a;font-size:16px;transform:scaleX(0.8489);">5</div>
<div class="t" style="left:1313.75px;top:848px;color:#1a1a1a;font-size:16px;transform:scaleX(0.8681);">44,55</div>
<div class="t" style="left:1359.00px;top:848px;color:#1a1a1a;font-size:16px;transform:scaleX(0.8207);">EUR</div>
<div class="t" style="left:394.00px;top:875px;color:#1a1a1a;font-size:16px;transform:scaleX(0.9064);">Facture</div>
<div class="t" style="left:476.00px;top:875px;color:#1a1a1a;font-size:16px;transform:scaleX(0.8582);">FAP 0000...</div>
<div class="t" style="left:559.00px;top:875px;color:#1a1a1a;font-size:16px;transform:scaleX(0.8812);">06/11/2025</div>
<div class="t" style="left:641.00px;top:875px;color:#1a1a1a;font-size:16px;transform:scaleX(0.8393);">APP0000003</div>
<div class="t" style="left:744.00px;top:875px;color:#1a1a1a;font-size:16px;transform:scaleX(0.9436);">Appareil photo refle...</div>
<div class="t" style="left:939.50px;top:875px;color:#1a1a1a;font-size:16px;transform:scaleX(0.8029);">2 450,00</div>
<div class="t" style="left:1124.50px;top:875px;color:#1a1a1a;font-size:16px;transform:scaleX(0.8029);">2 450,00</div>
<div class="t" style="left:1257.95px;top:875px;color:#1a1a1a;font-size:16px;transform:scaleX(0.8489);">1</div>
<div class="t" style="left:1298.50px;top:875px;color:#1a1a1a;font-size:16px;transform:scaleX(0.8029);">2 450,00</div>
<div class="t" style="left:1359.00px;top:875px;color:#1a1a1a;font-size:16px;transform:scaleX(0.8207);">EUR</div>
<div class="t" style="left:394.00px;top:901px;color:#f4f4f6;font-size:16px;transform:scaleX(0.9064);">Facture</div>
<div class="t" style="left:476.00px;top:901px;color:#f4f4f6;font-size:16px;transform:scaleX(0.8582);">FAP 0000...</div>
<div class="t" style="left:559.00px;top:901px;color:#f4f4f6;font-size:16px;transform:scaleX(0.8812);">06/11/2025</div>
<div class="t" style="left:641.00px;top:901px;color:#f4f4f6;font-size:16px;transform:scaleX(0.8191);">PREST-DEPL...</div>
<div class="t" style="left:744.00px;top:901px;color:#f4f4f6;font-size:16px;transform:scaleX(0.8377);">DEPLACEMENT SUR...</div>
<div class="t" style="left:939.50px;top:901px;color:#f4f4f6;font-size:16px;transform:scaleX(0.8029);">3 000,00</div>
<div class="t" style="left:1124.50px;top:901px;color:#f4f4f6;font-size:16px;transform:scaleX(0.8029);">3 000,00</div>
<div class="t" style="left:1257.95px;top:901px;color:#f4f4f6;font-size:16px;transform:scaleX(0.8489);">1</div>
<div class="t" style="left:1298.50px;top:901px;color:#f4f4f6;font-size:16px;transform:scaleX(0.8029);">3 000,00</div>
<div class="t" style="left:1359.00px;top:901px;color:#f4f4f6;font-size:16px;transform:scaleX(0.8207);">EUR</div>
<div style="position:absolute;left:2469px;top:326px;width:20px;height:477px;background:#f0f0f0;"></div>
<div style="position:absolute;left:2469px;top:548px;width:18px;height:234px;background:#cbcbcb;"></div>
<div style="position:absolute;left:2469px;top:823px;width:20px;height:479px;background:#f0f0f0;"></div>
<div style="position:absolute;left:2469px;top:1019px;width:18px;height:262px;background:#cbcbcb;"></div>
<div style="position:absolute;left:0px;top:1327px;width:2560px;height:25px;background:#f88616;"></div>
<div style="position:absolute;left:0px;top:1351px;width:2560px;height:1px;background:#e57a14;"></div>
<div class="t" style="left:2074.00px;top:1330.5px;color:#ffffff;font-size:16px;transform:scaleX(0.8511);">12.3</div>
<div class="t" style="left:2203.00px;top:1330.5px;color:#ffffff;font-size:16px;transform:scaleX(0.8517);">MS SQL Server 2022</div>
<div class="t" style="left:2394.50px;top:1330.5px;color:#ffffff;font-size:16px;transform:scaleX(0.8750);">DEMO</div>
<svg width="2560" height="1352" viewBox="0 0 2560 1352">
<path d="M44,24 L60.5,8 L77,24 L77,44 L65,44 L65,31 L56,31 L56,44 L44,44 Z" fill="#717171"/>
<g stroke="#5c5c5c" stroke-width="2.4" fill="none"><path d="M155,13 H177 M189,13 H192.5 M155,26 H160.5 M170.5,26 H192.5 M155,38.5 H171 M183,38.5 H192.5"/><path d="M182.5,10 V17 M165.3,22.5 V29.5 M177.3,35 V42"/></g>
<rect x="277.5" y="8.5" width="35" height="34.5" fill="#8757ad"/><path d="M282.5,19.8 H307.5 M282.5,32.3 H307.5" stroke="#fff" stroke-width="2"/>
<rect x="400" y="8.5" width="16" height="16" fill="#8757ad"/><path d="M403,14.0 H413 M403,19.0 H413" stroke="#fff" stroke-width="1.3"/>
<rect x="390" y="28.75" width="16" height="16" fill="#8757ad"/><path d="M393,34.25 H403 M393,39.25 H403" stroke="#fff" stroke-width="1.3"/>
<rect x="410" y="28.75" width="16" height="16" fill="#8757ad"/><path d="M413,34.25 H423 M413,39.25 H423" stroke="#fff" stroke-width="1.3"/>
<rect x="514" y="5" width="28.5" height="42" fill="#717171"/>
<rect x="519" y="10" width="3.6" height="3.6" fill="#fff"/>
<rect x="519" y="17.5" width="3.6" height="3.6" fill="#fff"/>
<rect x="519" y="25" width="3.6" height="3.6" fill="#fff"/>
<rect x="526.5" y="10" width="3.6" height="3.6" fill="#fff"/>
<rect x="526.5" y="17.5" width="3.6" height="3.6" fill="#fff"/>
<rect x="526.5" y="25" width="3.6" height="3.6" fill="#fff"/>
<rect x="534" y="10" width="3.6" height="3.6" fill="#fff"/>
<rect x="534" y="17.5" width="3.6" height="3.6" fill="#fff"/>
<rect x="534" y="25" width="3.6" height="3.6" fill="#fff"/>
<rect x="525" y="36" width="7.5" height="11" fill="#fff"/>
<circle cx="641.3" cy="17" r="8.8" fill="#717171"/><path d="M623.8,43.8 C624.5,34 632,28 641.3,28 C650.6,28 658,34 658.8,43.8 Z" fill="#717171"/>
<path d="M747.5,6 H766.0 L777.5,17.5 V45.6 H747.5 Z" fill="#e0634e"/>
<path d="M766.5,5.5 V16.5 H778.0" stroke="#fff" stroke-width="1.3" fill="none"/>
<path d="M754.0,30 H771.0 M754.0,37.7 H771.0" stroke="#fff" stroke-width="1.3"/>
<path d="M754.3,22 L758.25,12.5 L762.2,22 M755.8,18.7 H760.7" stroke="#fff" stroke-width="1.3" fill="none"/>
<path d="M860,6 H878.5 L890,17.5 V45.6 H860 Z" fill="#4f80bf"/>
<path d="M879,5.5 V16.5 H890.5" stroke="#fff" stroke-width="1.3" fill="none"/>
<path d="M866.5,30 H883.5 M866.5,37.7 H883.5" stroke="#fff" stroke-width="1.3"/>
<path d="M866.5,12.5 L870.5,22 L874.5,12.5" stroke="#fff" stroke-width="1.3" fill="none"/>
<circle cx="996.3" cy="25.6" r="17.5" fill="#717171"/>
<path d="M1001.5,19.5 C999.5,17.8 997.8,17.6 996.2,17.6 C992,17.6 989.6,21 989.6,25.6 C989.6,30.2 992,33.6 996.2,33.6 C997.8,33.6 999.5,33.2 1001.5,31.6" stroke="#fff" stroke-width="2.2" fill="none"/><path d="M987.5,23.6 H997 M987.5,27.6 H997" stroke="#fff" stroke-width="1.6"/>
<rect x="1100" y="8.5" width="35" height="34.5" fill="#f7891b"/><path d="M1107.5,27.5 L1114.4,33.8 L1127.5,20" stroke="#fff" stroke-width="1.5" fill="none"/>
<path d="M1229.2,8.2 C1223.5,8.2 1217.8,12 1217.8,20 V28 C1217.8,32 1214,35 1212.5,36.6 C1212,37.5 1212.5,38.2 1213.5,38.2 H1245.3 C1246.3,38.2 1246.8,37.5 1246.2,36.6 C1244.5,35 1240.8,32 1240.8,28 V20 C1240.8,12 1235,8.2 1229.2,8.2 Z" fill="#f7891b"/>
<path d="M1223.3,29.4 H1235.3" stroke="#fff" stroke-width="1.6"/>
<path d="M1225.8,42.3 L1228,40.1 H1230.7 L1233,42.3 V43.2 H1230.7 V45.3 H1227.8 V43.2 H1225.8 Z" fill="#f7891b"/>
<g fill="#f7891b"><rect x="1333.7" y="40" width="3.8" height="4.3"/><rect x="1343.7" y="32.5" width="3.8" height="11.8"/><rect x="1353.7" y="28.7" width="3.8" height="15.6"/><rect x="1363.7" y="20" width="3.8" height="24.3"/></g>
<path d="M1334,32.2 L1344,22.6 L1349.4,27 L1365,11.5" stroke="#f7891b" stroke-width="2" fill="none"/><path d="M1360.5,8.5 L1368,8.5 L1368,16 Z" fill="#f7891b"/>
<circle cx="1472.5" cy="25.6" r="17.5" fill="#f7891b"/>
<path d="M1473.5,24.6 V7.100000000000001 A18.0,18.0 0 0 1 1491.0,24.6 Z" fill="#fbb06a"/>
<path d="M1472.5,25.6 V7.100000000000001 M1472.5,25.6 H1491.0 M1472.5,25.6 L1458.5,36.1" stroke="#fff" stroke-width="1.3"/>
<path d="M1596.7,10.6 L1598.6,8.9 H1604.8 V11.2 H1603.2 V15.5 H1608.7 V14.1 L1610.6,14.1 V20.9 L1608.8,22.8 H1600.5 L1589.8,33.5 V41.3 L1588.2,43 H1582.9 V40.9 H1584.4 V35.3 H1579.1 V36.8 H1576.4 V30.6 L1578.3,29.6 H1586.8 L1596.7,19.7 Z" fill="#717171"/>
<circle cx="1579.7" cy="11.7" r="3.5" fill="#7d7d7d"/><path d="M1580.5,12.5 L1590.5,22.5" stroke="#7d7d7d" stroke-width="2.8"/><path d="M1597.6,29.6 L1608.4,40.4" stroke="#717171" stroke-width="6.4" stroke-linecap="round"/><path d="M1594.5,32.6 L1600.7,26.5 L1594.5,26.5 Z" fill="#ffffff"/>
<polygon points="1714.70,8.40 1719.28,21.09 1732.77,21.53 1722.12,29.81 1725.87,42.77 1714.70,35.20 1703.53,42.77 1707.28,29.81 1696.63,21.53 1710.12,21.09" fill="#f7891b"/>
<rect x="1808" y="11.5" width="40" height="29.5" rx="2.2" fill="#8a8a8a"/><rect x="1809.5" y="13" width="37" height="9" rx="1" fill="#e9e9e9"/><g fill="#8a8a8a"><circle cx="1835.8" cy="15.5" r="1"/><circle cx="1839.3" cy="15.5" r="1"/><circle cx="1842.8" cy="15.5" r="1"/></g>
<path d="M1929.5,17 C1929.5,10 1934,6.8 1940,6.8 C1946.5,6.8 1950.8,10.5 1950.8,16.5 C1950.8,22.5 1946,24.5 1943,27 C1940.5,29 1940,31 1940,36.5" stroke="#f7891b" stroke-width="3" fill="none"/><rect x="1938.2" y="40.5" width="3.6" height="5.5" fill="#f7891b"/>
<circle cx="18.2" cy="103.7" r="9.1" stroke="#4a4a4a" stroke-width="1.3" fill="none"/><path d="M18.2,98.5 V109 M13,103.7 H23.5" stroke="#4a4a4a" stroke-width="1.3"/>
<circle cx="633.3" cy="103.7" r="9.1" stroke="#4a4a4a" stroke-width="1.3" fill="none"/><path d="M637.8,103.7 H628.5 M632,100 L628.3,103.7 L632,107.4" stroke="#4a4a4a" stroke-width="1.3" fill="none"/>
<circle cx="744.7" cy="103.7" r="9.1" stroke="#4a4a4a" stroke-width="1.3" fill="none"/><path d="M740.2,103.7 H749.5 M746,100 L749.7,103.7 L746,107.4" stroke="#4a4a4a" stroke-width="1.3" fill="none"/>
<path d="M114.6,110.8 V97 H120.5 L122.5,99.2 H130.5 V102" stroke="#4a4a4a" stroke-width="1.3" fill="none"/><path d="M114.6,110.8 L118.5,102.2 H133.8 L130,110.8 Z" stroke="#4a4a4a" stroke-width="1.3" fill="none" stroke-linejoin="round"/>
<path d="M200.7,94.7 H216 L219.5,98.2 V113 H200.7 Z" stroke="#a9a9a9" stroke-width="1.3" fill="none"/><path d="M204.5,94.7 V100.5 H214.5 V94.7 M204,113 V106 H216 V113" stroke="#a9a9a9" stroke-width="1.3" fill="none"/>
<path d="M315.7,94.7 H331 L334.5,98.2 V113 H315.7 Z" stroke="#a9a9a9" stroke-width="1.3" fill="none"/><path d="M319.5,94.7 V99.5 H329.5 V94.7 M320,105 L323.5,108.5 L330,101.5" stroke="#a9a9a9" stroke-width="1.3" fill="none"/>
<path d="M509.5,96.8 A9,9 0 1 0 517.5,95.3" stroke="#4a4a4a" stroke-width="1.3" fill="none"/><path d="M506.5,94.3 L510.2,96.8 L507.3,100.2" stroke="#4a4a4a" stroke-width="1.3" fill="none"/>
<path d="M848.5,112.5 H839.7 V94.7 H851.5 V101" stroke="#a9a9a9" stroke-width="1.3" fill="none"/><circle cx="848" cy="105" r="4.5" stroke="#a9a9a9" stroke-width="1.3" fill="none"/><path d="M851.3,108.3 L855.7,112.7 M843,98.5 H848" stroke="#a9a9a9" stroke-width="1.3"/>
<path d="M934.5,99 V95 H945.5 V99 M934,109.5 H930.7 V99.5 H949.3 V109.5 H946" stroke="#4a4a4a" stroke-width="1.3" fill="none"/><path d="M934.5,105 H945.5 V113 H934.5 Z M936.5,108 H943.5 M936.5,110.5 H943.5" stroke="#4a4a4a" stroke-width="1.3" fill="none"/>
<path d="M1040.5,98.5 V95 H1051.5 V98.5 M1040,108.5 H1036.7 V99 H1053 V102" stroke="#4a4a4a" stroke-width="1.3" fill="none"/><path d="M1040.5,104 H1047 M1040.5,107 V111.5 H1045" stroke="#4a4a4a" stroke-width="1.3" fill="none"/><circle cx="1051" cy="109" r="3.2" stroke="#4a4a4a" stroke-width="2.2" fill="none" stroke-dasharray="1.6 1"/><circle cx="1051" cy="109" r="2" fill="#4a4a4a"/>
<g stroke="#e9722a" stroke-width="1.5" fill="none"><path d="M8,150 L15,143 L18.5,146.5 L26.5,138.5"/><path d="M8.5,152.5 V157 M13.5,150.5 V157 M18.5,150.5 V157 M23.5,146 V157"/></g><path d="M22,137 H28 V143 Z" fill="#e9722a"/>
<path d="M105.5,143.5 L113.5,151.5 M113.5,143.5 L105.5,151.5" stroke="#3a3a3a" stroke-width="1.6"/>
<path d="M392.5,143.5 L400.5,151.5 M400.5,143.5 L392.5,151.5" stroke="#3a3a3a" stroke-width="1.6"/>
<rect x="2494" y="149.6" width="11" height="2" fill="#6e7585"/>
<path d="M2515,146 H2523 V152.5 H2515 Z M2518.5,146 V143 H2527 V149.5 H2523" stroke="#6e7585" stroke-width="1.8" fill="none"/>
<path d="M2540,144.5 L2549,151.5 M2549,144.5 L2540,151.5" stroke="#6e7585" stroke-width="2.4"/>
<g stroke="#e9722a" stroke-width="1.5" fill="none"><path d="M368,242.5 L375,235.5 L378.5,239.0 L386.5,231.0"/><path d="M368.5,245.0 V249.5 M373.5,243.0 V249.5 M378.5,243.0 V249.5 M383.5,238.5 V249.5"/></g><path d="M382,229.5 H388 V235.5 Z" fill="#e9722a"/>
<path d="M460,229.5 H480 V242 Q480,249.8 472,249.8 H460 Z" fill="#f7891b"/><path d="M474.5,235.2 A6,6.3 0 1 0 474.5,244.2" stroke="#fff" stroke-width="1.6" fill="none"/>
<rect x="560.8" y="230.3" width="18.5" height="18.5" stroke="#f7891b" stroke-width="1.5" fill="none"/><path d="M565,239.5 L568.8,243.3 L575.5,235" stroke="#f7891b" stroke-width="1.5" fill="none"/>
<rect x="655.8" y="230.3" width="13.5" height="19" stroke="#4a4a4a" stroke-width="1.4" fill="none"/><rect x="658" y="233" width="9" height="2" fill="#4a4a4a"/><g fill="#4a4a4a"><rect x="658.5" y="238.5" width="2" height="2"/><rect x="664" y="238.5" width="2" height="2"/><rect x="658.5" y="243.5" width="2" height="2"/><rect x="664" y="243.5" width="2" height="2"/></g>
<rect x="750" y="231" width="18.8" height="3.6" fill="#ff6a00"/><path d="M753.2,229 V232.5 M765,229 V232.5" stroke="#ff6a00" stroke-width="1.2"/><path d="M752,234.6 H755 M763.3,234.6 H766.3" stroke="#efefef" stroke-width="0.8"/>
<rect x="755.05" y="236.00" width="3.7" height="3.6" fill="#fbb88a"/>
<rect x="760.10" y="236.00" width="3.7" height="3.6" fill="#ff6a00"/>
<rect x="765.15" y="236.00" width="3.7" height="3.6" fill="#fbb88a"/>
<rect x="750.00" y="241.00" width="3.7" height="3.6" fill="#ff6a00"/>
<rect x="755.05" y="241.00" width="3.7" height="3.6" fill="#fbb88a"/>
<rect x="760.10" y="241.00" width="3.7" height="3.6" fill="#fbb88a"/>
<rect x="765.15" y="241.00" width="3.7" height="3.6" fill="#fbb88a"/>
<rect x="750.00" y="246.00" width="3.7" height="3.6" fill="#fbb88a"/>
<rect x="755.05" y="246.00" width="3.7" height="3.6" fill="#ff6a00"/>
<rect x="760.10" y="246.00" width="3.7" height="3.6" fill="#fbb88a"/>
<rect x="765.15" y="246.00" width="3.7" height="3.6" fill="#ff6a00"/>
<path d="M854,237.5 L859,242.5 L867.5,232.5" stroke="#f7891b" stroke-width="2" fill="none"/>
<path d="M946.3,231.3 V240.3 L941.6,244.6 C940.6,242.8 940.2,240.8 940.2,238.5 C940.2,235 942.6,232.2 946.3,231.3 Z" stroke="#ff6a1a" stroke-width="1.35" fill="none" stroke-linejoin="round"/>
<path d="M949.8,231.2 V238.6 H957.3 C957,234.6 954,231.5 949.8,231.2 Z" stroke="#ff6a1a" stroke-width="1.35" fill="#fcdcc4" stroke-linejoin="round"/>
<path d="M947.2,241.3 H957.3 C957.2,246 953.3,249.6 948.6,249.6 C946.2,249.6 944.2,248.7 942.7,247.2 Z" stroke="#ff6a1a" stroke-width="1.35" fill="none" stroke-linejoin="round"/>
<path d="M1086.3,231.6 L1088,233.3 L1091,229.9 M1086.3,238.3 L1088,240 L1091,236.6" stroke="#ff6a1a" stroke-width="1.4" fill="none"/><rect x="1093.3" y="230.5" width="12.2" height="2.9" stroke="#ff6a1a" stroke-width="1.4" fill="none"/><path d="M1094.6,236.8 H1093.3 V240.8 H1094.6 M1104.3,236.8 H1105.5 V240.8 H1104.3" stroke="#ff6a1a" stroke-width="1.2" fill="none"/><path d="M1099.4,237.3 L1101.4,239.3 L1099.4,241.3 L1097.4,239.3 Z" fill="#ff6a1a"/><path d="M1094.2,249.6 L1095.8,244.3 Q1096.5,242 1098.8,242 H1100 Q1102.3,242 1103,244.3 L1104.8,249.6 Z" fill="#ff6a1a"/>
<path d="M298,234 L305,227 L312,234" stroke="#bdbdbd" stroke-width="1.8" fill="none"/>
<path d="M298,658 L305,651 L312,658" stroke="#bdbdbd" stroke-width="1.8" fill="none"/>
<path d="M298,904 L305,897 L312,904" stroke="#bdbdbd" stroke-width="1.8" fill="none"/>
<path d="M330,225 L333.5,221 L337,225 Z" fill="#7a7a7a"/><path d="M330,1271 L333.5,1275 L337,1271 Z" fill="#7a7a7a"/>
<rect x="28.349999999999998" y="254.20000000000002" width="18.2" height="18.2" stroke="#7a4ea3" stroke-width="1.35" fill="none"/><path d="M30.2,260.3 H44.7 M30.2,266.7 H44.7" stroke="#7a4ea3" stroke-width="1.35"/>
<path d="M41.25,294.4 V288.25 H28.349999999999998 V301.09999999999997 H34.8" stroke="#c5aada" stroke-width="1.35" fill="none"/>
<path d="M41.25,294.4 V288.25 H28.349999999999998 V301.09999999999997 H34.8" stroke="#7a4ea3" stroke-opacity="0.75" stroke-width="1.35" fill="none"/>
<circle cx="41.9" cy="301.5" r="5.7" fill="#7a4ea3"/><path d="M41.9,298.7 V304.3 M39.1,301.5 H44.7" stroke="#fff" stroke-width="1.4"/>
<path d="M42.65,330.3 V325.55 H28.349999999999998 V339.95 H33.4" stroke="#7a4ea3" stroke-width="1.35" fill="none"/><path d="M30.2,330.3 H41.0 M30.2,335.2 H33.5" stroke="#7a4ea3" stroke-width="1.35"/><circle cx="40.1" cy="337.0" r="4.3" stroke="#7a4ea3" stroke-width="1.35" fill="none"/><path d="M43.0,339.90000000000003 L46.7,343.6" stroke="#7a4ea3" stroke-width="2"/>
<rect x="27.7" y="368.5" width="1.8" height="13.5" fill="#7a4ea3"/>
<rect x="31.2" y="368.5" width="1.1" height="13.5" fill="#c5aada"/>
<rect x="34.1" y="368.5" width="0.8" height="13.5" fill="#7a4ea3"/>
<rect x="36.6" y="376.3" width="2.1" height="5.7" fill="#7a4ea3"/>
<rect x="40.5" y="373.8" width="0.8" height="8.2" fill="#7a4ea3"/>
<rect x="43.0" y="371.3" width="1.8" height="10.7" fill="#7a4ea3"/>
<rect x="46.5" y="368.5" width="1.1" height="13.5" fill="#c5aada"/>
<polygon points="35.10,374.20 38.80,373.46 46.97,365.76 44.23,362.85 36.06,370.55" fill="#7a4ea3"/>
<circle cx="46.54" cy="363.42" r="2.20" fill="#7a4ea3"/>
<path d="M47.02,366.40 L43.59,362.76" stroke="#fff" stroke-width="0.8"/>
<path d="M37.3,400.35 H28.349999999999998 V415.05 H43.05 V406.1" stroke="#7a4ea3" stroke-width="1.35" fill="none"/><path d="M30.2,405.4 H33.9 M30.2,410.4 H41.0" stroke="#7a4ea3" stroke-width="1.35"/>
<polygon points="35.10,407.90 38.81,407.23 46.92,399.86 44.23,396.90 36.12,404.27" fill="#7a4ea3"/>
<circle cx="46.53" cy="397.51" r="2.20" fill="#7a4ea3"/>
<path d="M46.96,400.50 L43.59,396.80" stroke="#fff" stroke-width="0.8"/>
<rect x="27.7" y="429.90000000000003" width="7.1" height="3.2" fill="#7a4ea3"/><path d="M28.349999999999998,435.3 V448.0 M27.7,437.70000000000005 H33.7 M27.7,442.70000000000005 H33.7 M27.7,447.3 H33.7" stroke="#7a4ea3" stroke-width="1.35" fill="none"/><rect x="35.1" y="446.3" width="7.1" height="3.5" fill="#7a4ea3"/><rect x="35.1" y="443.40000000000003" width="7.1" height="1.4" fill="#c5aada"/>
<polygon points="35.10,441.30 38.83,440.75 46.82,433.95 44.23,430.90 36.24,437.70" fill="#7a4ea3"/>
<circle cx="46.51" cy="431.58" r="2.20" fill="#7a4ea3"/>
<path d="M46.84,434.59 L43.60,430.78" stroke="#fff" stroke-width="0.8"/>
<rect x="28.45" y="467.85" width="6.65" height="6.65" stroke="#7a4ea3" stroke-width="1.5" fill="none"/>
<rect x="39.75" y="467.85" width="6.65" height="6.65" stroke="#c5aada" stroke-width="1.5" fill="none"/>
<rect x="28.45" y="479.25" width="6.65" height="6.65" stroke="#c5aada" stroke-width="1.5" fill="none"/>
<rect x="39.75" y="479.25" width="6.65" height="6.65" stroke="#7a4ea3" stroke-width="1.5" fill="none"/>
<rect x="28.45" y="501.95" width="3.1" height="3.1" stroke="#7a4ea3" stroke-width="1.5" fill="none"/>
<rect x="35.90" y="501.95" width="3.1" height="3.1" stroke="#c5aada" stroke-width="1.5" fill="none"/>
<rect x="43.35" y="501.95" width="3.1" height="3.1" stroke="#7a4ea3" stroke-width="1.5" fill="none"/>
<rect x="28.45" y="509.40" width="3.1" height="3.1" stroke="#c5aada" stroke-width="1.5" fill="none"/>
<rect x="35.90" y="509.40" width="3.1" height="3.1" stroke="#7a4ea3" stroke-width="1.5" fill="none"/>
<rect x="43.35" y="509.40" width="3.1" height="3.1" stroke="#c5aada" stroke-width="1.5" fill="none"/>
<rect x="28.45" y="516.85" width="3.1" height="3.1" stroke="#7a4ea3" stroke-width="1.5" fill="none"/>
<rect x="35.90" y="516.85" width="3.1" height="3.1" stroke="#c5aada" stroke-width="1.5" fill="none"/>
<rect x="43.35" y="516.85" width="3.1" height="3.1" stroke="#7a4ea3" stroke-width="1.5" fill="none"/>
<rect x="27.7" y="538.6" width="8.2" height="2.1" fill="#7a4ea3"/><rect x="28.349999999999998" y="542.75" width="6.9" height="14.7" stroke="#7a4ea3" stroke-width="1.35" fill="none"/><path d="M29.8,547.8000000000001 H33.7 M29.8,552.8000000000001 H33.7" stroke="#7a4ea3" stroke-width="1.1"/>
<rect x="39.0" y="538.6" width="8.2" height="2.1" fill="#7a4ea3"/><rect x="39.65" y="542.75" width="6.9" height="14.7" stroke="#7a4ea3" stroke-width="1.35" fill="none"/><path d="M41.1,547.8000000000001 H45.0 M41.1,552.8000000000001 H45.0" stroke="#7a4ea3" stroke-width="1.1"/>
<path d="M29.099999999999998,579.4000000000001 L33.9,584.2 L29.099999999999998,589.0" stroke="#7a4ea3" stroke-width="1.2" fill="none"/><rect x="37.6" y="572.3000000000001" width="8.5" height="2.1" fill="#7a4ea3"/><rect x="38.5" y="580.2" width="6.7" height="5" fill="#c5aada"/><rect x="38.25" y="576.85" width="7.2" height="14.3" stroke="#7a4ea3" stroke-width="1.35" fill="none"/><path d="M39.7,581.5 H43.7 M39.7,586.1 H43.7" stroke="#7a4ea3" stroke-width="1.1"/>
<path d="M42.65,616.3000000000001 V610.5500000000001 H28.349999999999998 V624.95 H34.8" stroke="#7a4ea3" stroke-width="1.35" fill="none"/><path d="M30.2,615.3000000000001 H41.0 M30.2,620.2 H34.0" stroke="#7a4ea3" stroke-width="1.35"/>
<circle cx="41.9" cy="623.8000000000001" r="4.60" fill="#7a4ea3"/>
<rect x="40.60" y="617.90" width="2.6" height="2.95" fill="#7a4ea3" transform="rotate(0 41.9 623.8000000000001)"/>
<rect x="40.60" y="617.90" width="2.6" height="2.95" fill="#7a4ea3" transform="rotate(45 41.9 623.8000000000001)"/>
<rect x="40.60" y="617.90" width="2.6" height="2.95" fill="#7a4ea3" transform="rotate(90 41.9 623.8000000000001)"/>
<rect x="40.60" y="617.90" width="2.6" height="2.95" fill="#7a4ea3" transform="rotate(135 41.9 623.8000000000001)"/>
<rect x="40.60" y="617.90" width="2.6" height="2.95" fill="#7a4ea3" transform="rotate(180 41.9 623.8000000000001)"/>
<rect x="40.60" y="617.90" width="2.6" height="2.95" fill="#7a4ea3" transform="rotate(225 41.9 623.8000000000001)"/>
<rect x="40.60" y="617.90" width="2.6" height="2.95" fill="#7a4ea3" transform="rotate(270 41.9 623.8000000000001)"/>
<rect x="40.60" y="617.90" width="2.6" height="2.95" fill="#7a4ea3" transform="rotate(315 41.9 623.8000000000001)"/>
<path d="M41.6,620.8000000000001 V624.6 H44.699999999999996" stroke="#fff" stroke-width="1.3" fill="none"/>
<path d="M33.4,697.05 H28.349999999999998 V679.25 H42.65 V684.1999999999999" stroke="#7a4ea3" stroke-width="1.35" fill="none"/>
<text x="31.9" y="689.5999999999999" font-family="Liberation Sans" font-weight="bold" font-size="10" fill="#7a4ea3">€</text>
<polygon points="35.10,697.40 38.83,696.86 46.51,690.35 43.93,687.30 36.25,693.81" fill="#7a4ea3"/>
<circle cx="46.21" cy="687.98" r="2.20" fill="#7a4ea3"/>
<path d="M46.53,690.99 L43.30,687.17" stroke="#fff" stroke-width="0.8"/>
<path d="M32.3,730.85 H28.349999999999998 V712.95 H44.05 V716.9" stroke="#d8191f" stroke-width="1.35" fill="none"/>
<text x="30.5" y="724.0" font-family="Liberation Sans" font-weight="bold" font-size="10" fill="#d8191f">€</text>
<polygon points="35.10,731.80 38.83,731.20 46.56,724.45 43.93,721.44 36.20,728.19" fill="#d8191f"/>
<circle cx="46.22" cy="722.09" r="2.20" fill="#d8191f"/>
<path d="M46.59,725.09 L43.30,721.33" stroke="#fff" stroke-width="0.8"/>
<rect x="28.45" y="751.75" width="18" height="15.5" stroke="#7a4ea3" stroke-width="1.5" fill="#ffffff"/><rect x="27.7" y="751.0" width="19.5" height="2.8" fill="#7a4ea3"/>
<path d="M29.2,756.1 H45.7" stroke="#b79ad0" stroke-width="1.6" stroke-dasharray="3 1.2"/>
<path d="M29.2,759.1999999999999 H45.7" stroke="#9b76bb" stroke-width="1.6" stroke-dasharray="3 1.2"/>
<path d="M29.2,762.3 H45.7" stroke="#b79ad0" stroke-width="1.6" stroke-dasharray="3 1.2"/>
<path d="M29.2,765.4 H45.7" stroke="#9b76bb" stroke-width="1.6" stroke-dasharray="3 1.2"/>
<rect x="33.7" y="754.4" width="9" height="11" fill="#ffffff" opacity="0.55"/>
<text x="33.9" y="765.6" font-family="Liberation Sans" font-weight="bold" font-size="11.5" fill="#7a4ea3">€</text>
<path d="M27.7,790.3 H34.8" stroke="#7a4ea3" stroke-width="2"/><path d="M28.349999999999998,790.3 V802.7 M27.7,794.9 H33.0 M42.6,794.9 H44.7 M27.7,798.8 H45.3 M27.7,802.05 H45.3 M44.65,792.4 V802.7" stroke="#7a4ea3" stroke-width="1.35" fill="none"/><path d="M29.2,800.5 H43.7" stroke="#c5aada" stroke-width="1.4" stroke-dasharray="2 2"/>
<polygon points="34.40,796.30 38.10,795.57 46.66,787.56 43.93,784.64 35.37,792.65" fill="#7a4ea3"/>
<circle cx="46.24" cy="785.22" r="2.20" fill="#7a4ea3"/>
<path d="M46.71,788.20 L43.29,784.55" stroke="#fff" stroke-width="0.8"/>
<polygon points="28.5,826.6 36.3,818.0 38.6,818.0 46.5,826.0 46.5,835.85 36.3,835.85" stroke="#7a4ea3" stroke-width="1.35" fill="none" stroke-linejoin="round"/><circle cx="33.0" cy="826.5" r="1.3" stroke="#7a4ea3" stroke-width="1.1" fill="none"/><circle cx="43.0" cy="829.0" r="1.3" stroke="#7a4ea3" stroke-width="1.1" fill="none"/><path d="M38.0,823.3 V831.5" stroke="#7a4ea3" stroke-width="1.4"/>
<path d="M27.7,855.5500000000001 H41.25 V861.0" stroke="#7a4ea3" stroke-width="1.35" fill="none"/><path d="M27.7,874.1 H35.85" stroke="#7a4ea3" stroke-width="1.35"/><path d="M45.099999999999994,856.5 V859.0 M45.099999999999994,861.0 V862.8000000000001" stroke="#7a4ea3" stroke-width="1.6"/>
<text x="30.7" y="865.2" font-family="Liberation Sans" font-weight="bold" font-size="9.5" fill="#c5aada">€</text>
<text x="30.7" y="865.2" font-family="Liberation Sans" font-weight="bold" font-size="9.5" fill="#7a4ea3">€</text>
<circle cx="41.9" cy="868.8000000000001" r="4.21" fill="#7a4ea3"/>
<rect x="40.60" y="863.40" width="2.6" height="2.70" fill="#7a4ea3" transform="rotate(0 41.9 868.8000000000001)"/>
<rect x="40.60" y="863.40" width="2.6" height="2.70" fill="#7a4ea3" transform="rotate(45 41.9 868.8000000000001)"/>
<rect x="40.60" y="863.40" width="2.6" height="2.70" fill="#7a4ea3" transform="rotate(90 41.9 868.8000000000001)"/>
<rect x="40.60" y="863.40" width="2.6" height="2.70" fill="#7a4ea3" transform="rotate(135 41.9 868.8000000000001)"/>
<rect x="40.60" y="863.40" width="2.6" height="2.70" fill="#7a4ea3" transform="rotate(180 41.9 868.8000000000001)"/>
<rect x="40.60" y="863.40" width="2.6" height="2.70" fill="#7a4ea3" transform="rotate(225 41.9 868.8000000000001)"/>
<rect x="40.60" y="863.40" width="2.6" height="2.70" fill="#7a4ea3" transform="rotate(270 41.9 868.8000000000001)"/>
<rect x="40.60" y="863.40" width="2.6" height="2.70" fill="#7a4ea3" transform="rotate(315 41.9 868.8000000000001)"/>
<circle cx="41.9" cy="868.8000000000001" r="1.9" fill="#fff"/>
<circle cx="25.7" cy="933.8" r="7.4" stroke="#3f3f3f" stroke-width="1.3" fill="none"/><path d="M22.7,930.8 L28.3,936.4 M28.599999999999998,932.4 V936.7 H24.3" stroke="#3f3f3f" stroke-width="1.3" fill="none"/>
<circle cx="25.7" cy="1215.1" r="7.4" stroke="#3f3f3f" stroke-width="1.3" fill="none"/><path d="M22.7,1212.1 L28.3,1217.7 M28.599999999999998,1213.7 V1218.0 H24.3" stroke="#3f3f3f" stroke-width="1.3" fill="none"/>
<rect x="60.85" y="957.9" width="18.2" height="18.2" stroke="#7a4ea3" stroke-width="1.35" fill="none"/><path d="M62.7,964 H77.2 M62.7,970.4 H77.2" stroke="#7a4ea3" stroke-width="1.35"/>
<rect x="60.2" y="994.6" width="3.3" height="13.7" fill="#7a4ea3"/>
<rect x="65.4" y="994.6" width="1.3" height="13.7" fill="#7a4ea3"/>
<rect x="68.60000000000001" y="994.6" width="1.6" height="13.7" fill="#7a4ea3"/>
<rect x="72.0" y="994.6" width="1.2" height="13.7" fill="#7a4ea3"/>
<rect x="75.0" y="994.6" width="0.9" height="13.7" fill="#c5aada"/>
<rect x="78.6" y="994.6" width="1.4" height="13.7" fill="#7a4ea3"/>
<rect x="60.95" y="1028.6499999999999" width="6.65" height="6.65" stroke="#7a4ea3" stroke-width="1.5" fill="none"/>
<rect x="72.25" y="1028.6499999999999" width="6.65" height="6.65" stroke="#c5aada" stroke-width="1.5" fill="none"/>
<rect x="60.95" y="1040.05" width="6.65" height="6.65" stroke="#c5aada" stroke-width="1.5" fill="none"/>
<rect x="72.25" y="1040.05" width="6.65" height="6.65" stroke="#7a4ea3" stroke-width="1.5" fill="none"/>
<rect x="60.95" y="1062.95" width="3.1" height="3.1" stroke="#7a4ea3" stroke-width="1.5" fill="none"/>
<rect x="68.40" y="1062.95" width="3.1" height="3.1" stroke="#c5aada" stroke-width="1.5" fill="none"/>
<rect x="75.85" y="1062.95" width="3.1" height="3.1" stroke="#7a4ea3" stroke-width="1.5" fill="none"/>
<rect x="60.95" y="1070.40" width="3.1" height="3.1" stroke="#c5aada" stroke-width="1.5" fill="none"/>
<rect x="68.40" y="1070.40" width="3.1" height="3.1" stroke="#7a4ea3" stroke-width="1.5" fill="none"/>
<rect x="75.85" y="1070.40" width="3.1" height="3.1" stroke="#c5aada" stroke-width="1.5" fill="none"/>
<rect x="60.95" y="1077.85" width="3.1" height="3.1" stroke="#7a4ea3" stroke-width="1.5" fill="none"/>
<rect x="68.40" y="1077.85" width="3.1" height="3.1" stroke="#c5aada" stroke-width="1.5" fill="none"/>
<rect x="75.85" y="1077.85" width="3.1" height="3.1" stroke="#7a4ea3" stroke-width="1.5" fill="none"/>
<rect x="60.2" y="1099.5" width="8.2" height="2.1" fill="#7a4ea3"/><rect x="60.85" y="1103.65" width="6.9" height="14.7" stroke="#7a4ea3" stroke-width="1.35" fill="none"/><path d="M62.300000000000004,1108.7 H66.2 M62.300000000000004,1113.7 H66.2" stroke="#7a4ea3" stroke-width="1.1"/>
<rect x="71.5" y="1099.5" width="8.2" height="2.1" fill="#7a4ea3"/><rect x="72.15" y="1103.65" width="6.9" height="14.7" stroke="#7a4ea3" stroke-width="1.35" fill="none"/><path d="M73.6,1108.7 H77.5 M73.6,1113.7 H77.5" stroke="#7a4ea3" stroke-width="1.1"/>
<path d="M61.6,1141.0 L66.4,1145.8 L61.6,1150.6" stroke="#7a4ea3" stroke-width="1.2" fill="none"/><rect x="70.10000000000001" y="1133.8999999999999" width="8.5" height="2.1" fill="#7a4ea3"/><rect x="71.0" y="1141.8" width="6.7" height="5" fill="#c5aada"/><rect x="70.75" y="1138.45" width="7.2" height="14.3" stroke="#7a4ea3" stroke-width="1.35" fill="none"/><path d="M72.2,1143.1 H76.2 M72.2,1147.7 H76.2" stroke="#7a4ea3" stroke-width="1.1"/>
<path d="M75.15,1177.3 V1171.55 H60.85 V1185.9499999999998 H67.3" stroke="#7a4ea3" stroke-width="1.35" fill="none"/><path d="M62.7,1176.3 H73.5 M62.7,1181.1999999999998 H66.5" stroke="#7a4ea3" stroke-width="1.35"/>
<circle cx="74.4" cy="1184.8" r="4.60" fill="#7a4ea3"/>
<rect x="73.10" y="1178.90" width="2.6" height="2.95" fill="#7a4ea3" transform="rotate(0 74.4 1184.8)"/>
<rect x="73.10" y="1178.90" width="2.6" height="2.95" fill="#7a4ea3" transform="rotate(45 74.4 1184.8)"/>
<rect x="73.10" y="1178.90" width="2.6" height="2.95" fill="#7a4ea3" transform="rotate(90 74.4 1184.8)"/>
<rect x="73.10" y="1178.90" width="2.6" height="2.95" fill="#7a4ea3" transform="rotate(135 74.4 1184.8)"/>
<rect x="73.10" y="1178.90" width="2.6" height="2.95" fill="#7a4ea3" transform="rotate(180 74.4 1184.8)"/>
<rect x="73.10" y="1178.90" width="2.6" height="2.95" fill="#7a4ea3" transform="rotate(225 74.4 1184.8)"/>
<rect x="73.10" y="1178.90" width="2.6" height="2.95" fill="#7a4ea3" transform="rotate(270 74.4 1184.8)"/>
<rect x="73.10" y="1178.90" width="2.6" height="2.95" fill="#7a4ea3" transform="rotate(315 74.4 1184.8)"/>
<path d="M74.10000000000001,1181.8 V1185.6 H77.2" stroke="#fff" stroke-width="1.3" fill="none"/>
<svg x="0" y="0" width="323" height="1283" overflow="hidden">
<rect x="60.95" y="1241.35" width="18" height="15.5" stroke="#7a4ea3" stroke-width="1.5" fill="#ffffff"/><rect x="60.2" y="1240.6" width="19.5" height="2.8" fill="#7a4ea3"/>
<path d="M61.7,1245.7 H78.2" stroke="#b79ad0" stroke-width="1.6" stroke-dasharray="3 1.2"/>
<path d="M61.7,1248.8 H78.2" stroke="#9b76bb" stroke-width="1.6" stroke-dasharray="3 1.2"/>
<path d="M61.7,1251.9 H78.2" stroke="#b79ad0" stroke-width="1.6" stroke-dasharray="3 1.2"/>
<path d="M61.7,1255 H78.2" stroke="#9b76bb" stroke-width="1.6" stroke-dasharray="3 1.2"/>
<rect x="66.2" y="1244" width="9" height="11" fill="#ffffff" opacity="0.55"/>
<text x="66.4" y="1255.2" font-family="Liberation Sans" font-weight="bold" font-size="11.5" fill="#7a4ea3">€</text>
<polygon points="61.0,1282.7 68.8,1274.1 71.10000000000001,1274.1 79.0,1282.1 79.0,1291.95 68.8,1291.95" stroke="#7a4ea3" stroke-width="1.35" fill="none" stroke-linejoin="round"/><circle cx="65.5" cy="1282.6" r="1.3" stroke="#7a4ea3" stroke-width="1.1" fill="none"/><circle cx="75.5" cy="1285.1" r="1.3" stroke="#7a4ea3" stroke-width="1.1" fill="none"/><path d="M70.5,1279.4 V1287.6" stroke="#7a4ea3" stroke-width="1.4"/>
</svg>
<path d="M378.5,539.5 L383.3,544 L378.5,548.5" stroke="#f7891b" stroke-width="1.8" fill="none"/>
<path d="M378.5,905.5 L383.3,910 L378.5,914.5" stroke="#f7891b" stroke-width="1.8" fill="none"/>
<path d="M2474,339 L2478,335 L2482,339" stroke="#555" stroke-width="1.8" fill="none"/>
<path d="M2474,791 L2478,795 L2482,791" stroke="#555" stroke-width="1.8" fill="none"/>
<path d="M2474,836 L2478,832 L2482,836" stroke="#555" stroke-width="1.8" fill="none"/>
<path d="M2474,1289 L2478,1293 L2482,1289" stroke="#555" stroke-width="1.8" fill="none"/>
<path d="M2051.5,1333 H2068.5 V1345 L2064.5,1349.5 H2051.5 Z" stroke="#fff" stroke-width="1.3" fill="none"/><path d="M2063.5,1337 A4.5,4.5 0 1 0 2064.5,1341.5 H2060" stroke="#fff" stroke-width="1.4" fill="none"/>
<g fill="#fff"><ellipse cx="2188.5" cy="1334.8" rx="6.5" ry="2.3"/><path d="M2182,1336.3 Q2188.5,1339.5 2195,1336.3 V1339.5 Q2188.5,1342.5 2182,1339.5 Z"/><path d="M2182,1341 Q2188.5,1344 2195,1341 V1344.5 Q2188.5,1347.5 2182,1344.5 Z"/></g>
<g fill="#fff"><circle cx="2380" cy="1335.5" r="2.8"/><path d="M2375,1347 Q2375,1339.5 2380,1339.5 Q2385,1339.5 2385,1347 Z"/></g>
</svg>
</body></html>
